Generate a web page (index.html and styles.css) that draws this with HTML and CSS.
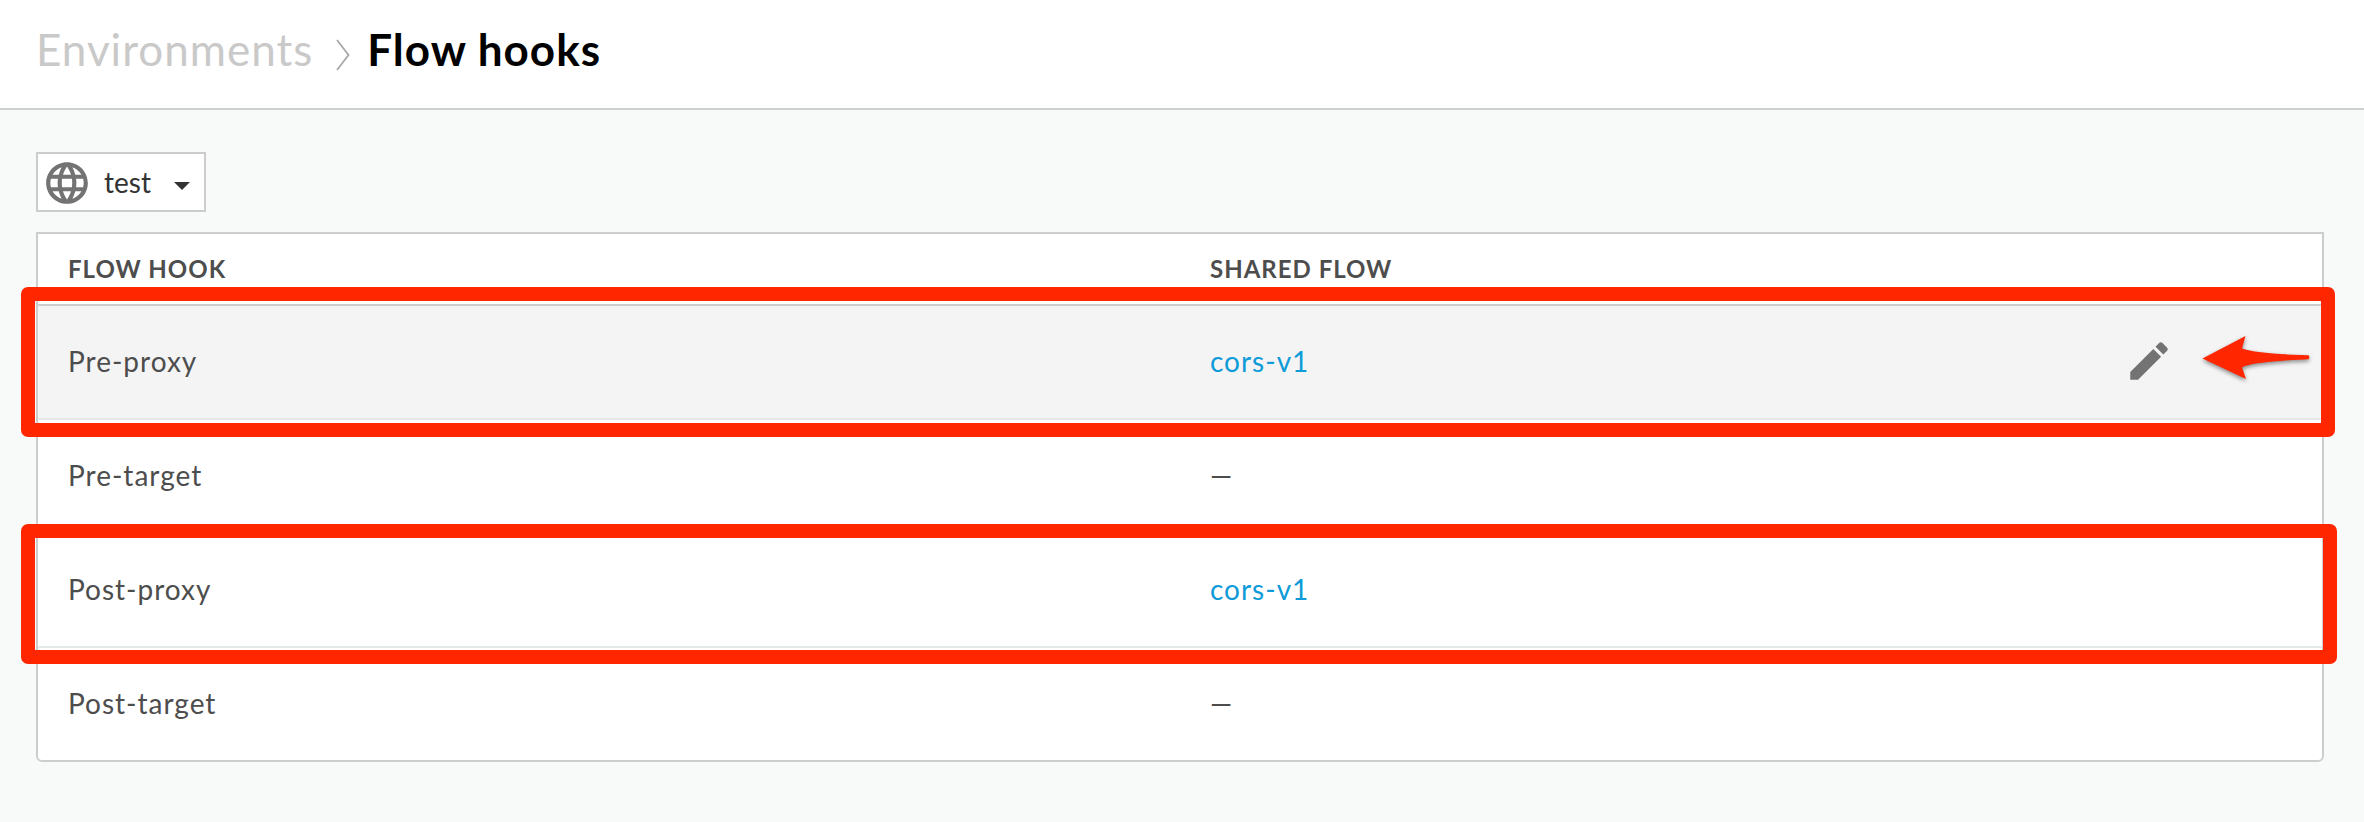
FILE: index.html
```html
<!DOCTYPE html>
<html lang="en">
<head>
<meta charset="utf-8">
<title>Flow hooks</title>
<link rel="stylesheet" href="styles.css">
</head>
<body>
<header class="header">
  <a class="crumb">Environments</a>
  <svg class="chevron" width="14" height="32" viewBox="0 0 14 32"><path d="M1 1 12.500 16 1 31" fill="none" stroke="#a8a8a8" stroke-width="1.800"/></svg>
  <h1 class="title">Flow hooks</h1>
</header>
<main class="main">
  <div class="select">
    <svg class="globe" width="50" height="50" viewBox="0 0 24 24"><path fill="#737373" d="M11.990 2C6.470 2 2 6.480 2 12s4.470 10 9.990 10C17.520 22 22 17.520 22 12S17.520 2 11.990 2zm6.930 6h-2.950c-.32-1.250-.78-2.450-1.380-3.560 1.840.63 3.370 1.910 4.330 3.560zM12 4.040c.83 1.200 1.480 2.530 1.910 3.960h-3.820c.43-1.430 1.080-2.760 1.910-3.960zM4.260 14C4.100 13.360 4 12.690 4 12s.1-1.360.26-2h3.380c-.08.66-.14 1.320-.14 2 0 .68.06 1.340.14 2H4.260zm.82 2h2.950c.32 1.250.78 2.450 1.380 3.560-1.840-.63-3.370-1.900-4.330-3.560zm2.950-8H5.080c.96-1.660 2.490-2.930 4.330-3.560C8.810 5.550 8.350 6.750 8.030 8zM12 19.960c-.83-1.200-1.480-2.530-1.910-3.960h3.820c-.43 1.430-1.080 2.760-1.910 3.960zM14.340 14H9.660c-.09-.66-.16-1.320-.16-2 0-.68.07-1.350.16-2h4.680c.09.65.16 1.320.16 2 0 .68-.07 1.340-.16 2zm.25 5.560c.6-1.110 1.060-2.310 1.380-3.560h2.950c-.96 1.650-2.490 2.930-4.330 3.560zM16.360 14c.08-.66.14-1.320.14-2 0-.68-.06-1.340-.14-2h3.380c.16.64.26 1.310.26 2s-.1 1.360-.26 2h-3.380z"/></svg>
    <span class="select-label">test</span>
    <svg class="caret" width="16" height="8" viewBox="0 0 16 8"><path fill="#333" d="M0 0h16L8 8z"/></svg>
  </div>
  <div class="table">
    <div class="row head"><div>FLOW HOOK</div><div>SHARED FLOW</div></div>
    <div class="row active">
      <div>Pre-proxy</div><div><a class="link">cors-v1</a></div>
      <svg class="edit" width="50" height="50" viewBox="0 0 24 24"><path fill="#737373" d="M3 17.250V21h3.750L17.810 9.940l-3.750-3.750L3 17.250zM20.710 7.040c.39-.39.39-1.020 0-1.410l-2.340-2.340c-.39-.39-1.020-.39-1.410 0l-1.830 1.830 3.750 3.750 1.830-1.830z"/></svg>
    </div>
    <div class="row"><div>Pre-target</div><div>—</div></div>
    <div class="row"><div>Post-proxy</div><div><a class="link">cors-v1</a></div></div>
    <div class="row"><div>Post-target</div><div>—</div></div>
  </div>
</main>
<div class="mark mark-pre"></div>
<div class="mark mark-post"></div>
<svg class="arrow" width="120" height="56" viewBox="0 0 120 56"><path fill="#ff2600" d="M2.500 28.500 45.500 6 42 18.500C51 22 73 24.300 108.500 25.300Q110.300 27.300 108.500 29.300C73 31 50 33 42 37.500L46 49z"/></svg>
</body>
</html>
```
FILE: styles.css
```css
* { box-sizing: border-box; }
body {
  margin: 0;
  position: relative;
  height: 822px;
  overflow: hidden;
  background: #f8faf9;
  font-family: Lato, sans-serif;
  color: #4d4d4d;
}
.header {
  display: flex;
  align-items: center;
  height: 110px;
  padding: 0 36px 10px;
  background: #fff;
  border-bottom: 2px solid #cccfce;
}
.crumb, .title {
  margin: 0;
  font-size: 44px;
  line-height: 52px;
  letter-spacing: 1px;
  white-space: nowrap;
}
.crumb { color: #c9c9c9; }
.title { color: #000; font-weight: 700; }
.chevron { margin: 12px 17px 0 23px; }
.main { padding: 42px 40px 0 36px; }
.select {
  display: flex;
  align-items: center;
  width: 170px;
  height: 60px;
  padding-left: 4px;
  border: 2px solid #ccc;
  background: #fff;
}
.select-label { width: 70px; margin-left: 12px; padding-bottom: 1px; font-size: 28px; color: #333; }
.globe { margin-top: 2px; }
.caret { margin-top: 8px; }
.table {
  margin-top: 20px;
  border: 2px solid #cccecd;
  border-radius: 0 0 6px 6px;
  background: #fff;
  overflow: hidden;
}
.row {
  display: grid;
  grid-template-columns: 1142px 914px 50px;
  align-items: center;
  height: 114px;
  padding: 0 28px 2px 30px;
  border-bottom: 2px solid #e6e9ea;
  font-size: 28px;
  letter-spacing: 1px;
}
.row:last-child { height: 112px; border-bottom: 0; }
.head {
  height: 72px;
  border-color: #cccecd;
  font-size: 24px;
  font-weight: 700;
}
.active { background: #f4f4f4; }
.link { color: #0e9bd8; }
.mark {
  position: absolute;
  border: 14px solid #ff2600;
  border-radius: 7px;
}
.mark-pre { left: 20.500px; top: 287px; width: 2314.500px; height: 150px; }
.mark-post { left: 21px; top: 523.500px; width: 2316px; height: 140.500px; }
.arrow {
  position: absolute;
  left: 2200px;
  top: 330px;
  filter: drop-shadow(0 2px 2px rgba(0, 0, 0, 0.45));
}
```
